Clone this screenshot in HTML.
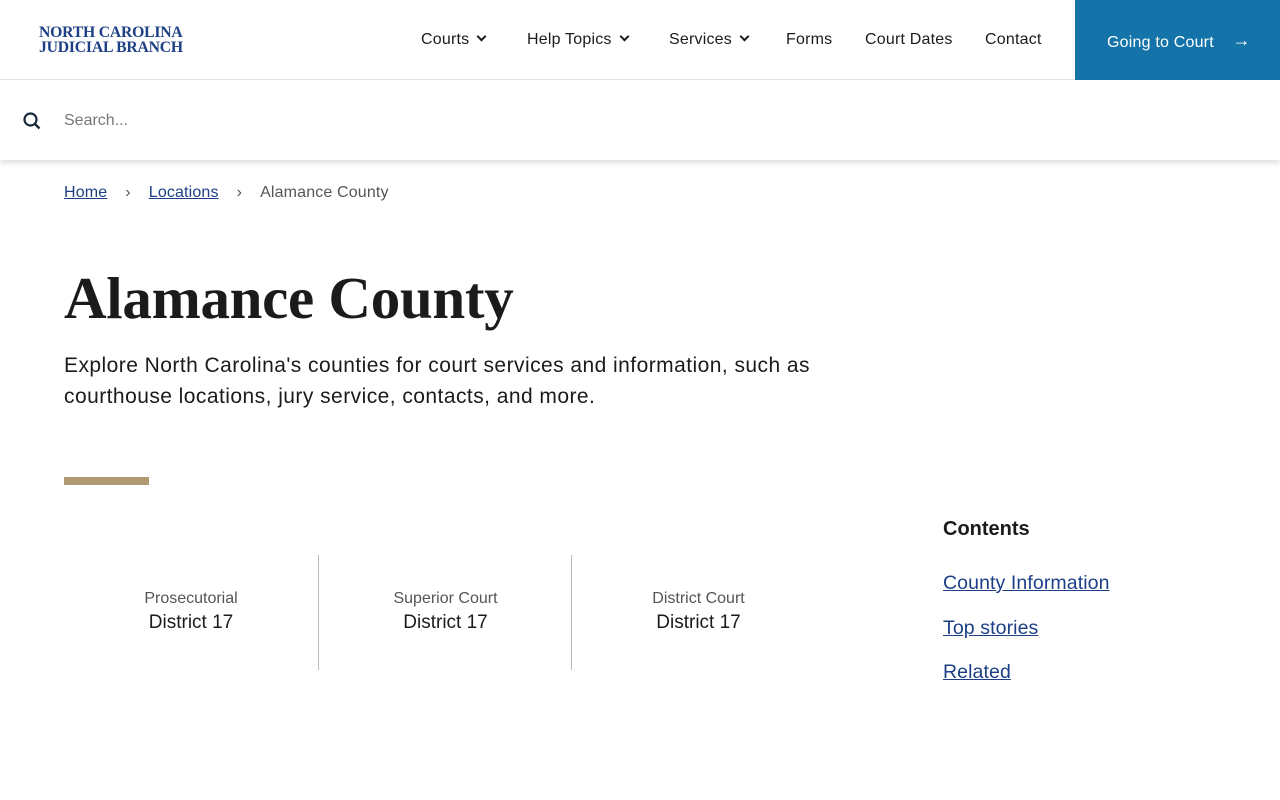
<!DOCTYPE html>
<html><head><meta charset="utf-8"><style>
*{margin:0;padding:0;box-sizing:border-box}
body{width:1280px;height:800px;overflow:hidden;background:#fff;font-family:"Liberation Sans",sans-serif;color:#1b1b1b;position:relative}
.hdr{position:absolute;top:0;left:0;width:1280px;height:80px;border-bottom:1px solid #e2e2e2}
.logo{position:absolute;left:39px;top:25px;font-family:"Liberation Serif",serif;font-weight:bold;color:#1c3f86;font-size:15.7px;line-height:15px;letter-spacing:-0.2px}
.nav{position:absolute;top:31px;font-size:16px;color:#1b1b1b;letter-spacing:0.2px}
.chev{display:inline-block;width:7px;height:7px;border-right:2px solid #1b1b1b;border-bottom:2px solid #1b1b1b;transform:rotate(45deg);margin-left:9px;position:relative;top:-4px}
.go{position:absolute;left:1075px;top:0;width:205px;height:80px;background:#1474aa;color:#fff;font-size:16px;padding:31px 0 0 32px;letter-spacing:0.2px}
.search{position:absolute;top:81px;left:0;width:1280px;height:79px;box-shadow:0 3px 5px rgba(0,0,0,.12)}
.bc{position:absolute;top:184px;left:64px;font-size:16px;color:#555;letter-spacing:0.15px}
.bc a{color:#1c3f86;text-decoration:underline}
h1{position:absolute;top:264px;left:64px;font-family:"Liberation Serif",serif;font-size:59px;font-weight:bold;letter-spacing:-0.3px;color:#1b1b1b}
.lead{position:absolute;top:350px;left:64px;width:820px;font-size:21px;line-height:31px;letter-spacing:0.45px}
.bar{position:absolute;top:477px;left:64px;width:85px;height:8px;background:#b09a74}
.col{position:absolute;top:555px;width:254px;height:115px;text-align:center;padding-top:35px}
.col .s{font-size:16px;color:#555}
.col .b{font-size:19px;margin-top:4px}
.toc{position:absolute;left:943px;top:518px}
.toc h3{font-size:20px;font-weight:bold;margin-bottom:31px}
.toc a{display:block;color:#1c3f86;font-size:19.5px;line-height:22px;text-decoration:underline;margin-bottom:22.5px;letter-spacing:0.1px}
</style></head><body>
<div class="hdr">
<div class="logo">NORTH CAROLINA<br>JUDICIAL BRANCH</div>
<div class="nav" style="left:421px">Courts<span class="chev"></span></div>
<div class="nav" style="left:527px">Help Topics<span class="chev"></span></div>
<div class="nav" style="left:669px">Services<span class="chev"></span></div>
<div class="nav" style="left:786px">Forms</div>
<div class="nav" style="left:865px">Court Dates</div>
<div class="nav" style="left:985px">Contact</div>
<div class="go">Going to Court <span style="margin-left:14px;font-size:18px;position:relative;top:-1px">→</span></div>
</div>
<div class="search">
<svg style="position:absolute;left:23px;top:31px" width="18" height="18" viewBox="0 0 18 18"><circle cx="7.5" cy="7.5" r="6" fill="none" stroke="#1b2b3b" stroke-width="2.2"/><line x1="12" y1="12" x2="16.5" y2="16.5" stroke="#1b2b3b" stroke-width="2.4"/></svg>
<div style="position:absolute;left:64px;top:31px;font-size:16px;color:#777">Search...</div>
</div>
<div class="bc"><a>Home</a><span style="margin:0 18px">›</span><a>Locations</a><span style="margin:0 18px">›</span>Alamance County</div>
<h1>Alamance County</h1>
<div class="lead">Explore North Carolina's counties for court services and information, such as courthouse locations, jury service, contacts, and more.</div>
<div class="bar"></div>
<div class="col" style="left:64px"><div class="s">Prosecutorial</div><div class="b">District 17</div></div>
<div class="col" style="left:318px;border-left:1px solid #bbb"><div class="s">Superior Court</div><div class="b">District 17</div></div>
<div class="col" style="left:571px;border-left:1px solid #bbb"><div class="s">District Court</div><div class="b">District 17</div></div>
<div class="toc"><h3>Contents</h3><a>County Information</a><a>Top stories</a><a>Related</a></div>
</body></html>
